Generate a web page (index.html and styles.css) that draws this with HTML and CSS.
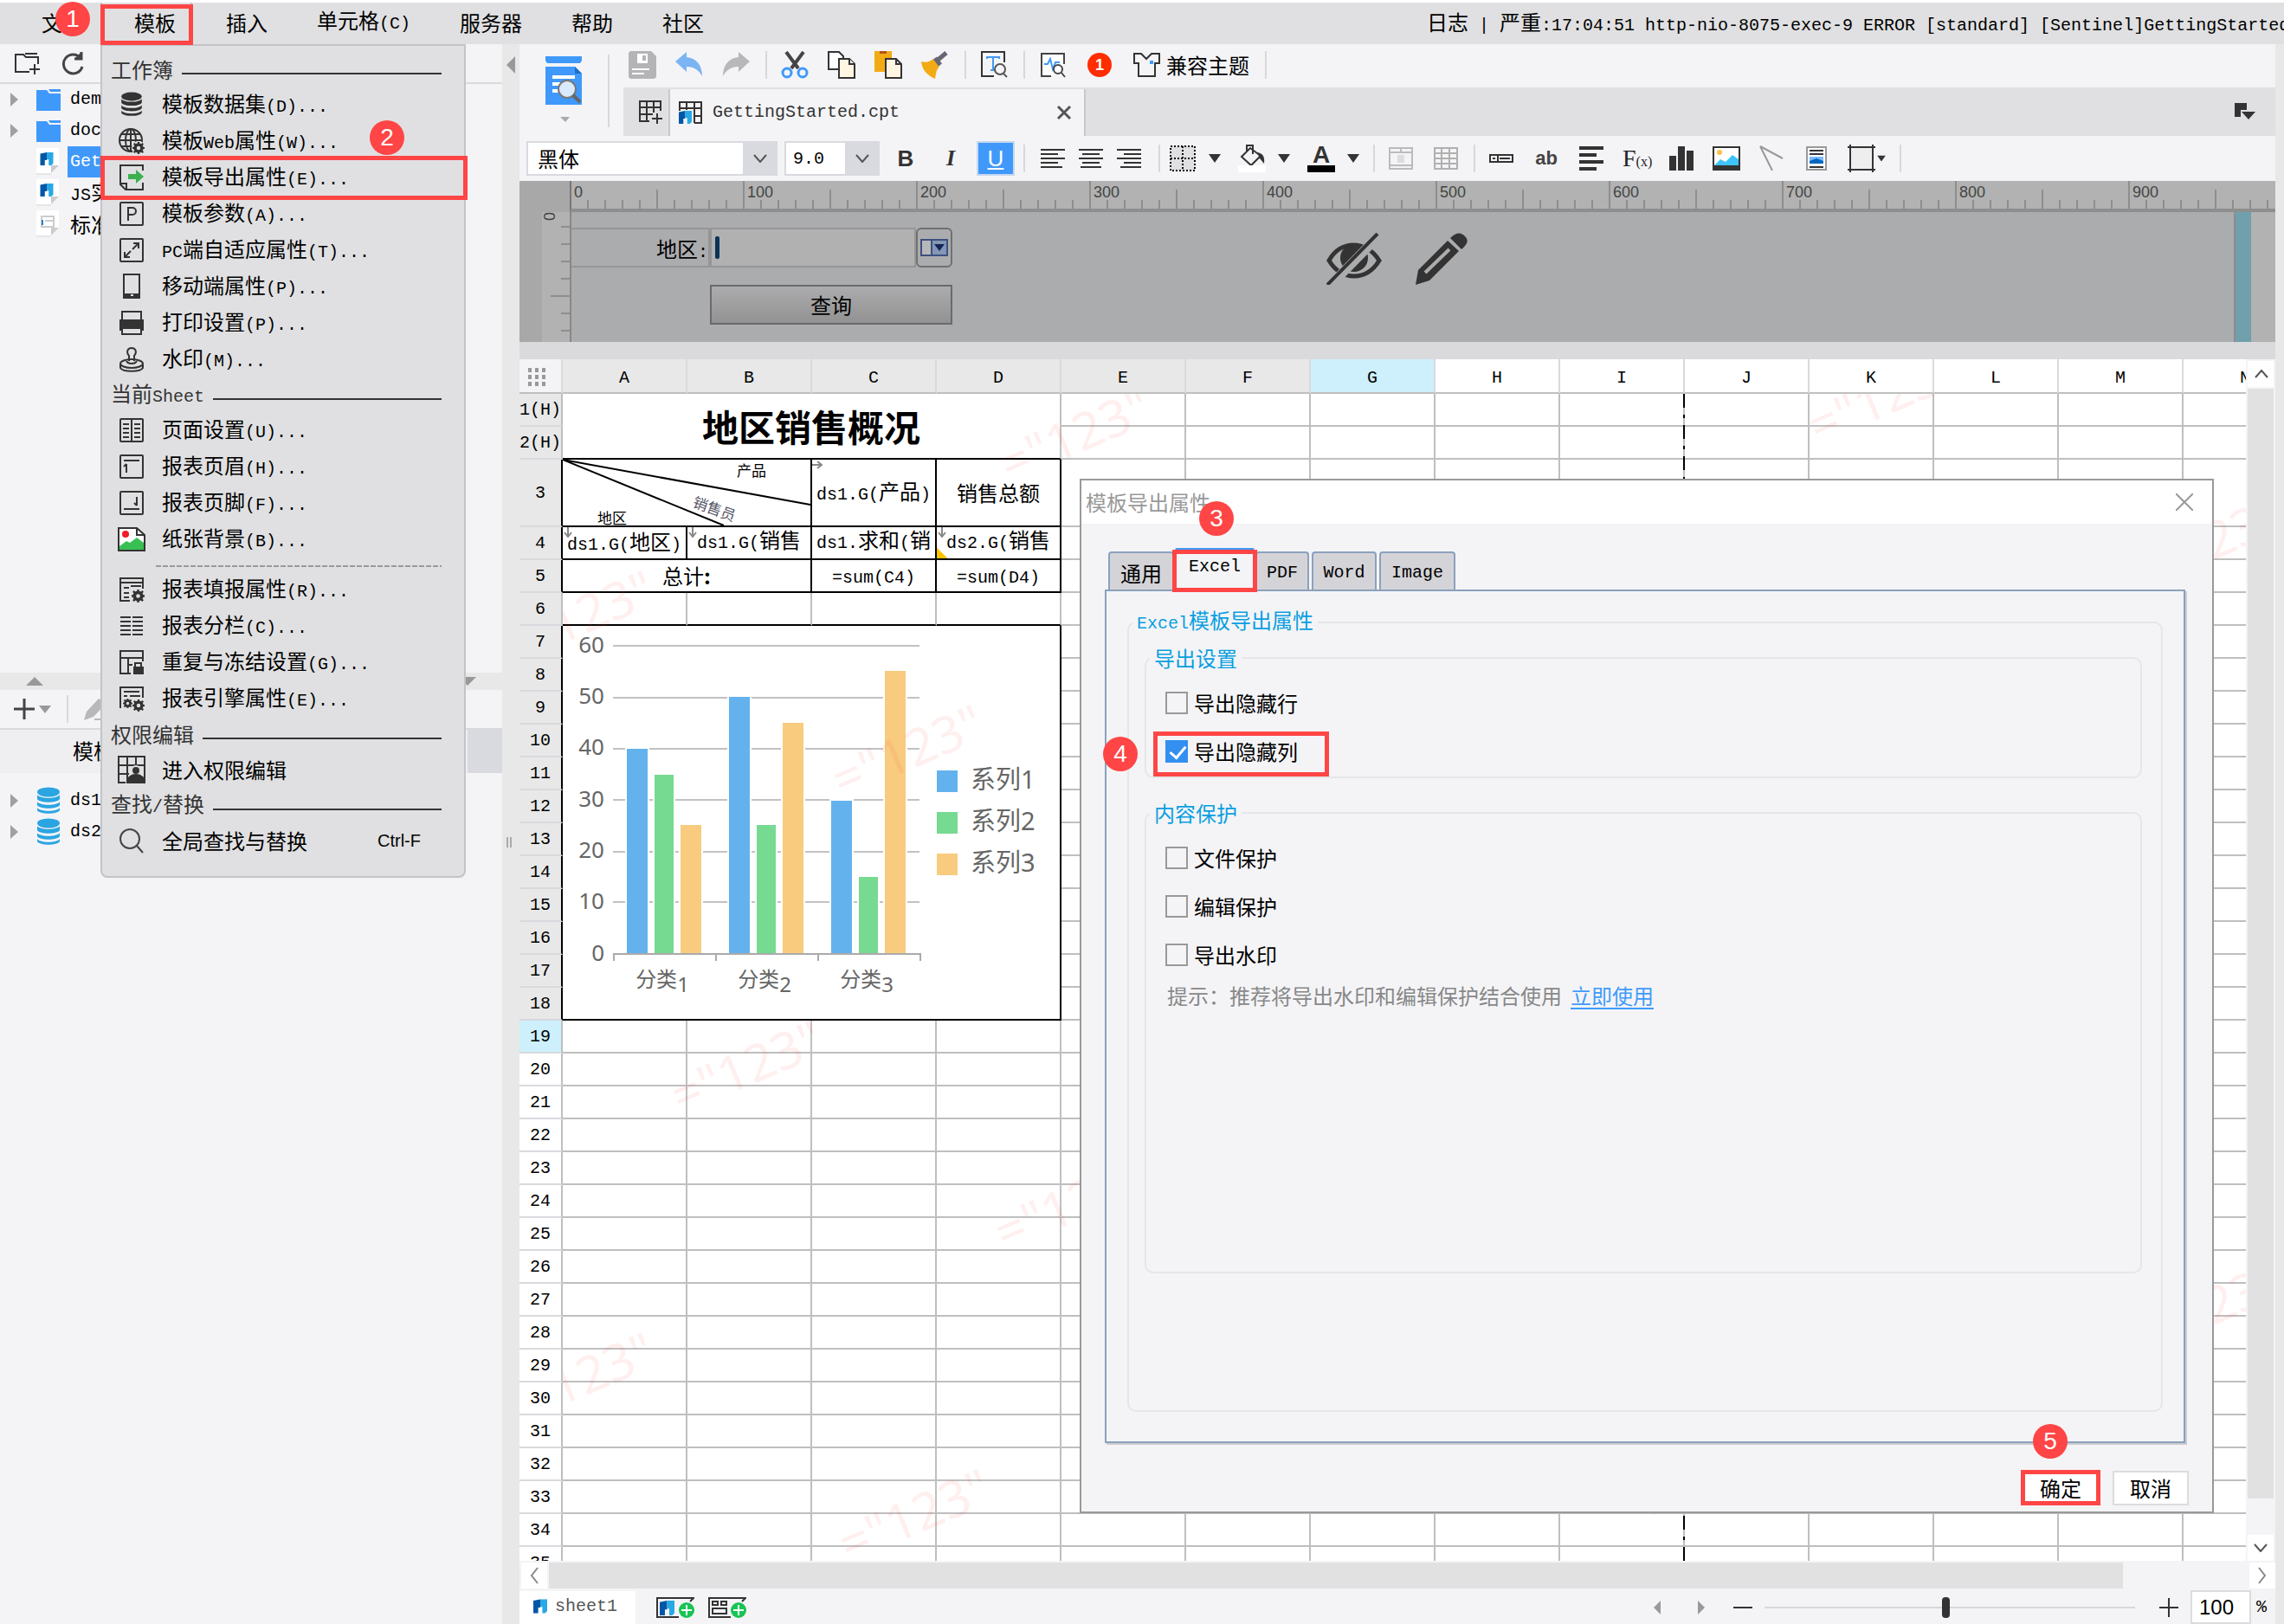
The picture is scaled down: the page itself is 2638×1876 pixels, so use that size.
FILE: index.html
```html
<!DOCTYPE html>
<html lang="zh-CN">
<head>
<meta charset="utf-8">
<title>GettingStarted.cpt</title>
<link rel="stylesheet" href="styles.css">
</head>
<body>
<svg class="defs" aria-hidden="true">
  <defs>
    <symbol id="db" viewBox="0 0 28 32"><ellipse cx="14" cy="6" rx="13" ry="5.500"/><path d="M1 9c3 5 23 5 26 0v5c-3 5-23 5-26 0zM1 17c3 5 23 5 26 0v4c-3 5-23 5-26 0zM1 24c3 5 23 5 26 0v3c-3 5-23 5-26 0z"/></symbol>
    <symbol id="folder" viewBox="0 0 28 26"><path d="M0 2h12l3 4h13v20H0z"/><path d="M14 1h14v3H16z"/></symbol>
    <symbol id="fr" viewBox="0 0 20 20"><path d="M0 2L10 0v12H7v8H0z" fill="#0057a8"/><path d="M10 0h10v17l-3 3h-4v-9h-3z" fill="#29a8e5"/></symbol>
    <symbol id="file" viewBox="0 0 26 32"><path d="M0 0h26v20l-9 9H0z" fill="#fff"/><path d="M17 29v-9h9z" fill="#ccc"/><path d="M0 30h17" stroke="#e6e6e6" stroke-width="2"/></symbol>
    <symbol id="gear" viewBox="0 0 16 16"><circle cx="8" cy="8" r="4.500" fill="none" stroke="#333" stroke-width="4"/><path d="M8 0v3M8 13v3M0 8h3M13 8h3M2 2l3 3M11 11l3 3M14 2l-3 3M5 11l-3 3" stroke="#333" stroke-width="2.500"/></symbol>
    <symbol id="caret" viewBox="0 0 14 10"><path d="M0 0h14L7 10z"/></symbol>
    <symbol id="chev" viewBox="0 0 16 10"><path d="M1 1l7 8 7-8" fill="none" stroke="#555" stroke-width="2"/></symbol>
    <symbol id="box" viewBox="0 0 32 32"><rect x="3" y="3" width="26" height="26" rx="1" fill="none" stroke="#333" stroke-width="2"/></symbol>
  </defs>
</svg>

<div class="app">
  <header class="menubar">
    <nav class="menus">
      <button class="mi">文件</button>
      <button class="mi open">模板</button>
      <button class="mi">插入</button>
      <button class="mi">单元格<span class="m">(C)</span></button>
      <button class="mi">服务器</button>
      <button class="mi">帮助</button>
      <button class="mi">社区</button>
    </nav>
    <p class="log">日志<span class="m"> | </span>严重<span class="m">:17:04:51 http-nio-8075-exec-9 ERROR [standard] [Sentinel]GettingStarted.cpt</span></p>
    <span class="mark mark-menu"></span>
    <span class="badge b1">1</span>
  </header>

  <div class="main">
    <aside class="side">
      <div class="sidebar-tools">
        <svg width="32" height="26" viewBox="0 0 32 26" fill="none" stroke="#333" stroke-width="2"><path d="M18 23H2V3h9l3 3h14v8M13 2h14M24 14v12M18 20h12"/></svg>
        <svg width="28" height="28" viewBox="0 0 28 28" fill="none" stroke="#444" stroke-width="3"><path d="M23 8A11 11 0 1 0 25 18"/><path d="M24 1v8h-8" fill="#444"/></svg>
      </div>
      <ul class="tree files">
        <li><i class="tri"></i><svg class="fold" width="28" height="26"><use href="#folder"/></svg><span class="m">demo</span></li>
        <li><i class="tri"></i><svg class="fold" width="28" height="26"><use href="#folder"/></svg><span class="m">doc</span></li>
        <li class="sel"><i class="tri none"></i><svg width="28" height="32"><use href="#file" width="26" height="32"/><use href="#fr" x="4" y="5" width="16" height="15"/></svg><span class="m">GettingStarted</span></li>
        <li><i class="tri none"></i><svg width="28" height="32"><use href="#file" width="26" height="32"/><use href="#fr" x="4" y="5" width="16" height="15"/></svg><span><span class="m">JS</span>实例</span></li>
        <li><i class="tri none"></i><svg width="28" height="32"><use href="#file" width="26" height="32"/><path d="M6 7h14v12H6zM10 12h10" fill="none" stroke="#ccc" stroke-width="2"/><path d="M7 11v6" stroke="#2b7fd0" stroke-width="2"/></svg><span>标准报表</span></li>
      </ul>
      <div class="hsplit"><i class="up"></i><i class="down"></i></div>
      <div class="sidebar-tools ds">
        <svg width="44" height="28" viewBox="0 0 44 28"><path d="M12 2v24M0 14h24" stroke="#444" stroke-width="3"/><path d="M29 10h14l-7 9z" fill="#999"/></svg>
        <i class="sep"></i>
        <svg width="30" height="28" viewBox="0 0 30 28" fill="#b8b8b8"><path d="M1 27l3-10L18 2l8 6-14 15zM13 25h16v2H13z"/></svg>
      </div>
      <div class="ds-head"><span>模板数据集</span></div>
      <ul class="tree">
        <li><i class="tri"></i><svg class="cyl" width="28" height="32"><use href="#db"/></svg><span class="m">ds1</span></li>
        <li><i class="tri"></i><svg class="cyl" width="28" height="32"><use href="#db"/></svg><span class="m">ds2</span></li>
      </ul>
    </aside>
    <div class="vsplit"><i></i><b></b></div>

    <section class="work">
      <div class="top">
        <button class="preview" aria-label="预览">
          <svg width="42" height="76" viewBox="0 0 42 76"><path d="M0 0h42v5l-2 3H2L0 5zM0 12h34l8 8v36H0z" fill="#3f99fa"/><path d="M34 12l8 8h-8z" fill="#1c6fc8"/><path d="M8 24h26M8 32h12M8 40h10" stroke="#fff" stroke-width="4"/><circle cx="25" cy="38" r="10" fill="#d9eafe" stroke="#777" stroke-width="2"/><path d="M32 45l8 8" stroke="#666" stroke-width="4"/><path d="M17 70h11l-5 6z" fill="#aaa"/></svg>
        </button>
        <div class="tools">
          <button aria-label="保存"><svg viewBox="0 0 32 32"><path d="M2 0h24l6 6v24l-2 2H2l-2-2V2z" fill="#b4b4b7"/><path d="M10 3h12v11H10z" fill="#fff"/><path d="M16 5h4v6h-4z" fill="#b4b4b7"/><path d="M4 21h20M4 26h14" stroke="#fff" stroke-width="2"/></svg></button>
          <button aria-label="撤销"><svg viewBox="0 0 32 32"><path d="M0 12L13 1v6c11 1 18 9 18 22-4-7-9-11-18-11v6z" fill="#7ab4f2"/></svg></button>
          <button aria-label="重做"><svg viewBox="0 0 32 32"><path d="M32 12L19 1v6C8 8 1 16 1 29c4-7 9-11 18-11v6z" fill="#b8b8ba"/></svg></button>
          <i class="sep"></i>
          <button aria-label="剪切"><svg viewBox="0 0 32 32" fill="none"><path d="M6 1l14 19M26 1L12 20" stroke="#444" stroke-width="4"/><circle cx="7" cy="25" r="5" stroke="#3f99fa" stroke-width="3"/><circle cx="25" cy="25" r="5" stroke="#3f99fa" stroke-width="3"/></svg></button>
          <button aria-label="复制"><svg viewBox="0 0 32 32" fill="#fff" stroke="#333" stroke-width="2"><path d="M1 1h12l5 5v15H1z"/><path d="M13 9h12l6 6v16H13z" fill="#fff5e0"/><path d="M25 9v6h6"/></svg></button>
          <button aria-label="粘贴"><svg viewBox="0 0 32 32"><path d="M0 0h20v24H0z" fill="#f2ab15"/><path d="M6 0h8v3H6z" fill="#b5531b"/><path d="M13 9h12l6 6v16H13zM25 9v6h6" fill="#fff5e0" stroke="#333" stroke-width="2"/></svg></button>
          <button aria-label="格式刷"><svg viewBox="0 0 32 32"><path d="M0 12c6 2 10 0 14-3l7 9c-4 4-4 9-5 14C7 28 1 22 0 12z" fill="#f2ab15"/><path d="M17 12L29 2M16 8l6 8" stroke="#666675" stroke-width="5"/></svg></button>
          <i class="sep"></i>
          <button aria-label="查找文本"><svg viewBox="0 0 32 32" fill="none" stroke="#333" stroke-width="2"><path d="M16 29H2V1h26v12"/><path d="M8 9V7h14v2M15 7v15M12 22h6" stroke="#3f99fa"/><circle cx="23" cy="21" r="6" stroke="#555"/><path d="M27 26l4 4" stroke="#555"/></svg></button>
          <i class="sep"></i>
          <button aria-label="性能诊断"><svg viewBox="0 0 32 32" fill="none" stroke="#444" stroke-width="2"><path d="M14 29H3V3h26v12" fill="#fff"/><path d="M6 15h4l3-6 3 12 3-8h5" stroke="#3f99fa"/><circle cx="22" cy="21" r="5" fill="#fff"/><path d="M26 25l4 5"/></svg></button>
          <span class="alert">1</span>
          <button class="theme"><svg viewBox="0 0 32 32" fill="none" stroke="#333" stroke-width="2"><path d="M2 3h8l6 6 6-6h9v11h-5v15H7V14H2z"/><path d="M20 11h4v4h-4z" fill="#3f99fa" stroke="none"/></svg><span>兼容主题</span></button>
          <i class="sep"></i>
        </div>
        <div class="doctabs">
          <button class="newtab" aria-label="新建"><svg width="30" height="30" viewBox="0 0 30 30" fill="none" stroke="#333" stroke-width="2"><path d="M13 26H2V3h24v11M2 10h24M2 18h15M10 3v23M18 3v13M22 17v12M16 23h12"/></svg></button>
          <button class="doctab"><svg width="28" height="28" viewBox="0 0 28 28"><path d="M1 12V2h25v24h-8M1 9h25M9 2v9M18 2v24M18 18h8" fill="none" stroke="#333" stroke-width="2"/><use href="#fr" y="12" width="15" height="15"/></svg><span class="m">GettingStarted.cpt</span><svg class="x" width="18" height="18" viewBox="0 0 18 18"><path d="M2 2l14 14M16 2L2 16" stroke="#555" stroke-width="3"/></svg></button>
          <svg class="tablist" width="26" height="20" viewBox="0 0 26 20" fill="#333"><path d="M1 0h14v8H8v8H1zM9 10h16l-8 9z"/></svg>
        </div>
      </div>

      <div class="format">
        <div class="fgroup g8">
          <label class="combo wide"><select aria-label="字体"><option>黑体</option></select><svg width="16" height="10"><use href="#chev"/></svg></label>
          <label class="combo"><select class="num" aria-label="字号"><option>9.0</option></select><svg width="16" height="10"><use href="#chev"/></svg></label>
          <button class="sq bold">B</button>
          <button class="sq ital">I</button>
          <button class="sq under">U</button>
          <i class="sep"></i>
          <button class="al" aria-label="左对齐"><svg width="28" height="24" viewBox="0 0 28 24"><path d="M0 2h28M0 7h20M0 12h28M0 17h20M0 22h25" stroke="#333" stroke-width="2"/></svg></button>
          <button class="al" aria-label="居中"><svg width="28" height="24" viewBox="0 0 28 24"><path d="M0 2h28M4 7h20M0 12h28M4 17h20M2 22h24" stroke="#333" stroke-width="2"/></svg></button>
          <button class="al" aria-label="右对齐"><svg width="28" height="24" viewBox="0 0 28 24"><path d="M0 2h28M8 7h20M0 12h28M8 17h20M4 22h24" stroke="#333" stroke-width="2"/></svg></button>
          <i class="sep"></i>
        </div>
        <div class="fgroup g20">
          <button class="drop" aria-label="边框"><svg viewBox="0 0 32 32"><path d="M2 2h28v28H2z" fill="#e0e0e2"/><path d="M2 2h28v28H2zM16 2v28M2 16h28" fill="none" stroke="#000" stroke-width="2" stroke-dasharray="2 2"/></svg><svg class="car"><use href="#caret"/></svg></button>
          <button class="drop" aria-label="背景色"><svg viewBox="0 0 32 32"><path d="M4 14L14 4l12 9-11 11zM10 8V1h7v10" fill="none" stroke="#333" stroke-width="2"/><path d="M22 9c6 1 9 4 8 13l-5-6z" fill="#333"/><path d="M0 24h32v8H0z" fill="#fff"/></svg><svg class="car"><use href="#caret"/></svg></button>
          <button class="drop fc" aria-label="字体颜色"><span class="fcl">A</span><svg class="car"><use href="#caret"/></svg></button>
          <i class="sep"></i>
          <button aria-label="合并"><svg viewBox="0 0 32 32" fill="none" stroke="#bbb" stroke-width="2"><path d="M3 4h26v24H3zM3 9h26M16 4v5M3 24h26"/><path d="M12 12h8v9h-8z" fill="#ddd" stroke="none"/></svg></button>
          <button aria-label="拆分"><svg viewBox="0 0 32 32" fill="none" stroke="#b0b0b0" stroke-width="2"><path d="M3 4h26v24H3zM3 10h26M3 16h26M3 22h26M11 4v24M20 4v24"/></svg></button>
          <i class="sep"></i>
          <button aria-label="控件"><svg viewBox="0 0 32 32" fill="none" stroke="#333" stroke-width="2"><path d="M3 12h26v8H3zM12 12v8M14 16h12M6 16h3"/></svg></button>
          <button class="ab">ab</button>
          <button aria-label="段落"><svg viewBox="0 0 32 32"><path d="M2 4h28M2 12h20M2 20h28M2 28h20" stroke="#333" stroke-width="4"/></svg></button>
          <button class="fx">F<small>(x)</small></button>
          <button aria-label="图表"><svg viewBox="0 0 32 32" fill="#333"><path d="M2 13h8v17H2zM12 2h8v28h-8zM22 7h8v23h-8z"/></svg></button>
          <button aria-label="图片"><svg viewBox="0 0 32 32"><path d="M1 3h30v26H1z" fill="#fff" stroke="#333" stroke-width="2"/><path d="M1 24h30v5H1z" fill="#333"/><circle cx="8" cy="9" r="3" fill="#fdc04f"/><path d="M2 24l7-7 6 3 8-8 7 5v7z" fill="#3fc3fb"/></svg></button>
          <button aria-label="斜线"><svg viewBox="0 0 32 32"><path d="M3 2l26 14M3 2l14 28" stroke="#999" stroke-width="2"/></svg></button>
          <button aria-label="富文本"><svg viewBox="0 0 32 32"><path d="M5 3h22v26H5z" fill="#fff" stroke="#999" stroke-width="2"/><path d="M8 7h16M8 11h16M8 26h16" stroke="#333" stroke-width="2"/><path d="M8 14h16v8H8z" fill="#7ab8ff"/><path d="M8 22v-3l8-3 8 3v3z" fill="#0067c0"/></svg></button>
          <button class="drop tight" aria-label="悬浮元素"><svg viewBox="0 0 32 32"><path d="M3 3h26v26H3z" fill="#eee"/><path d="M0 3h32M0 29h32M3 0v32M29 0v32" stroke="#333" stroke-width="2"/></svg><svg class="car" viewBox="0 0 14 10"><use href="#caret"/></svg></button>
          <i class="sep"></i>
        </div>
      </div>

      <div class="ruler"><div class="scale"><span>0</span><span>100</span><span>200</span><span>300</span><span>400</span><span>500</span><span>600</span><span>700</span><span>800</span><span>900</span></div></div>
      <div class="params">
        <div class="vruler"><span>0</span></div>
        <form class="pform">
          <div class="prow"><label for="area">地区<span class="m">:</span></label><span class="pin"><i></i><input id="area" type="text"></span><button type="button" class="pdrop" aria-label="选择"><svg width="32" height="20" viewBox="0 0 32 20"><path d="M1 1h30v18H1z" fill="#b8b8ba" stroke="#3d5080" stroke-width="2"/><path d="M13 1h18v18H13z" fill="#8397b5" stroke="#3d5080" stroke-width="2"/><path d="M16 6h12l-6 8z" fill="#142558"/></svg></button></div>
          <button type="button" class="query">查询</button>
        </form>
        <div class="teal"></div>
        <div class="pover">
          <svg width="64" height="60" viewBox="0 0 64 60"><path d="M3 32C16 8 46 8 61 32 46 56 18 56 3 32z" fill="none" stroke="#333" stroke-width="5"/><circle cx="32" cy="29" r="16" fill="#333"/><path d="M3 62L61 3" stroke="#abacae" stroke-width="11"/><path d="M1 60L59 1" stroke="#333" stroke-width="4"/></svg>
          <svg width="62" height="60" viewBox="0 0 62 60" fill="#333"><path d="M1 60l3-17L38 9l13 12-34 34z"/><path d="M41 6c8-8 13-6 17-2s4 8-4 15z"/><path d="M12 46l28-27" stroke="#abacae" stroke-width="4"/></svg>
        </div>
      </div>
      <div class="psplit"></div>

      <div class="sheetwrap">
        <div class="sheet">
          <table class="grid">
            <colgroup><col class="rh"><col span="14"></colgroup>
            <thead><tr><th class="corner"><svg width="22" height="22" viewBox="0 0 22 22" fill="#999"><path d="M0 0h4v5H0zM8 0h4v5H8zM16 0h4v5h-4zM0 8h4v5H0zM8 8h4v5H8zM16 8h4v5h-4zM0 16h4v5H0zM8 16h4v5H8zM16 16h4v5h-4z"/></svg></th><th>A<th>B<th>C<th>D<th>E<th>F<th class="cur">G<th class="w">H<th class="w">I<th class="w">J<th class="w">K<th class="w">L<th class="w">M<th class="w">N</tr></thead>
            <tbody>
              <tr><th>1(H)<td colspan="4" rowspan="2" class="title kb">地区销售概况<td><td><td><td><td><td><td><td><td><td></tr>
              <tr><th>2(H)<td><td><td><td><td><td><td><td><td><td></tr>
              <tr class="tall k"><th>3<td colspan="2" class="kc"><svg class="diag" width="286" height="76" viewBox="0 0 286 76"><path d="M0 0L286 52M0 0L186 76" stroke="#000" stroke-width="2"/><text x="201" y="19">产品</text><text x="40" y="74">地区</text><text transform="translate(149 54) rotate(20)" class="tint">销售员</text></svg><td class="kc ar"><span class="m">ds1.G(</span>产品<span class="m">)</span><svg class="ex right" width="12" height="12" viewBox="0 0 12 12"><path d="M0 6h10M6 2l5 4-5 4" stroke="#888" stroke-width="2" fill="none"/></svg><td class="kc">销售总额<td><td><td><td><td><td><td><td><td><td></tr>
              <tr class="k"><th>4<td class="kc ar"><span class="m">ds1.G(</span>地区<span class="m">)</span><svg class="ex" width="12" height="12" viewBox="0 0 12 12"><path d="M6 0v10M2 6l4 5 4-5" stroke="#888" stroke-width="2" fill="none"/></svg><td class="kc ar"><div class="clip"><span class="m">ds1.G(</span>销售<br>员<span class="m">)</span></div><svg class="ex" width="12" height="12" viewBox="0 0 12 12"><path d="M6 0v10M2 6l4 5 4-5" stroke="#888" stroke-width="2" fill="none"/></svg><td class="kc"><div class="clip"><span class="m">ds1.</span>求和<span class="m">(</span>销<br>量<span class="m">)</span></div><td class="kc ar warn"><div class="clip"><span class="m">ds2.G(</span>销售<br>总额<span class="m">)</span></div><svg class="ex" width="12" height="12" viewBox="0 0 12 12"><path d="M6 0v10M2 6l4 5 4-5" stroke="#888" stroke-width="2" fill="none"/></svg><td><td><td><td><td><td><td><td><td><td></tr>
              <tr class="k"><th>5<td colspan="2" class="kc">总计<b>:</b><td class="kc"><span class="m">=sum(C4)</span><td class="kc"><span class="m">=sum(D4)</span><td><td><td><td><td><td><td><td><td><td></tr>
              <tr><th>6<td class="kb"><td class="kb"><td class="kb"><td class="kb"><td><td><td><td><td><td><td><td><td><td></tr>
              <tr class="k"><th>7<td colspan="4" rowspan="12" class="kc chart">
                <svg width="574" height="454" viewBox="650 723 574 454">
                  <g stroke="#c2c2c2" stroke-width="2"><path d="M708 746h354M708 806h354M708 865h354M708 924h354M708 984h354M708 1042h354"/></g>
                  <g stroke="#fff" stroke-width="4" paint-order="stroke"><g fill="#63b2ee"><path d="M724 865h24v236h-24zM842 805h24v296h-24zM960 925h24v176h-24z"/></g><g fill="#76da91"><path d="M756 895h22v206h-22zM874 953h22v148h-22zM992 1013h22v88h-22z"/></g><g fill="#f8cb7f"><path d="M786 953h24v148h-24zM904 835h24v266h-24zM1022 775h24v326h-24z"/></g></g>
                  <path d="M709 1110v-8h354v8M827 1102v8M945 1102v8" fill="none" stroke="#aaa" stroke-width="2"/>
                  <g class="ax"><text x="698" y="754">60</text><text x="698" y="813">50</text><text x="698" y="872">40</text><text x="698" y="932">30</text><text x="698" y="991">20</text><text x="698" y="1050">10</text><text x="698" y="1110">0</text></g>
                  <g class="cat"><text x="765" y="1140">分类<tspan dy="6">1</tspan></text><text x="883" y="1140">分类<tspan dy="6">2</tspan></text><text x="1001" y="1140">分类<tspan dy="6">3</tspan></text></g>
                  <path d="M1082 890h24v25h-24z" fill="#63b2ee"/><path d="M1082 938h24v25h-24z" fill="#76da91"/><path d="M1082 986h24v25h-24z" fill="#f8cb7f"/>
                  <g class="leg"><text x="1121" y="911">系列1</text><text x="1121" y="959">系列2</text><text x="1121" y="1007">系列3</text></g>
                </svg><td><td><td><td><td><td><td><td><td><td></tr>
              <tr class="k"><th>8<td><td><td><td><td><td><td><td><td><td></tr>
              <tr class="k"><th>9<td><td><td><td><td><td><td><td><td><td></tr>
              <tr class="k"><th>10<td><td><td><td><td><td><td><td><td><td></tr>
              <tr class="k"><th>11<td><td><td><td><td><td><td><td><td><td></tr>
              <tr class="k"><th>12<td><td><td><td><td><td><td><td><td><td></tr>
              <tr class="k"><th>13<td><td><td><td><td><td><td><td><td><td></tr>
              <tr class="k"><th>14<td><td><td><td><td><td><td><td><td><td></tr>
              <tr class="k"><th>15<td><td><td><td><td><td><td><td><td><td></tr>
              <tr class="k"><th>16<td><td><td><td><td><td><td><td><td><td></tr>
              <tr class="k"><th>17<td><td><td><td><td><td><td><td><td><td></tr>
              <tr class="k"><th>18<td><td><td><td><td><td><td><td><td><td></tr>
              <tr><th class="cur">19<td><td><td><td><td><td><td><td><td><td><td><td><td><td></tr>
            </tbody>
            <tbody class="w">
              <tr><th>20<td><td><td><td><td><td><td><td><td><td><td><td><td><td></tr>
              <tr><th>21<td><td><td><td><td><td><td><td><td><td><td><td><td><td></tr>
              <tr><th>22<td><td><td><td><td><td><td><td><td><td><td><td><td><td></tr>
              <tr><th>23<td><td><td><td><td><td><td><td><td><td><td><td><td><td></tr>
              <tr><th>24<td><td><td><td><td><td><td><td><td><td><td><td><td><td></tr>
              <tr><th>25<td><td><td><td><td><td><td><td><td><td><td><td><td><td></tr>
              <tr><th>26<td><td><td><td><td><td><td><td><td><td><td><td><td><td></tr>
              <tr><th>27<td><td><td><td><td><td><td><td><td><td><td><td><td><td></tr>
              <tr><th>28<td><td><td><td><td><td><td><td><td><td><td><td><td><td></tr>
              <tr><th>29<td><td><td><td><td><td><td><td><td><td><td><td><td><td></tr>
              <tr><th>30<td><td><td><td><td><td><td><td><td><td><td><td><td><td></tr>
              <tr><th>31<td><td><td><td><td><td><td><td><td><td><td><td><td><td></tr>
              <tr><th>32<td><td><td><td><td><td><td><td><td><td><td><td><td><td></tr>
              <tr><th>33<td><td><td><td><td><td><td><td><td><td><td><td><td><td></tr>
              <tr><th>34<td><td><td><td><td><td><td><td><td><td><td><td><td><td></tr>
              <tr><th>35<td><td><td><td><td><td><td><td><td><td><td><td><td><td></tr>
            </tbody>
          </table>
          <svg class="wm" width="1944" height="1348" viewBox="650 455 1944 1348">
            <path d="M1945 455V1803" stroke="#000" stroke-width="2" stroke-dasharray="16 8 4 8"/>
            <g><text transform="translate(1165 558) rotate(-23)">="123"</text><text transform="translate(2099 514) rotate(-23)">="123"</text><text transform="translate(592 768) rotate(-23)">="123"</text><text transform="translate(972 923) rotate(-23)">="123"</text><text transform="translate(786 1288) rotate(-23)">="123"</text><text transform="translate(1160 1446) rotate(-23)">="123"</text><text transform="translate(592 1648) rotate(-23)">="123"</text><text transform="translate(980 1806) rotate(-23)">="123"</text><text transform="translate(1912 1763) rotate(-23)">="123"</text><text transform="translate(2472 683) rotate(-23)">="123"</text><text transform="translate(2472 1567) rotate(-23)">="123"</text></g>
          </svg>
        </div>
        <div class="vbar"><button class="sb" aria-label="向上"><svg width="18" height="11"><use href="#chev" transform="rotate(180 9 5)" width="16" height="10"/></svg></button><i></i><button class="sb" aria-label="向下"><svg width="16" height="10"><use href="#chev"/></svg></button></div>
      </div>
      <div class="hbar"><button class="sb" aria-label="向左"><svg width="10" height="20" viewBox="0 0 10 20"><path d="M9 1L2 10l7 9" fill="none" stroke="#888" stroke-width="2"/></svg></button><i></i><button class="sb end" aria-label="向右"><svg width="10" height="20" viewBox="0 0 10 20"><path d="M1 1l7 9-7 9" fill="none" stroke="#888" stroke-width="2"/></svg></button></div>
      <footer class="status">
        <button class="shtab"><svg width="16" height="17"><use href="#fr" width="16" height="17"/></svg><span class="m">sheet1</span></button>
        <button class="add" aria-label="新增报表"><svg width="44" height="26" viewBox="0 0 44 26"><path d="M26 24H1V2h42l-4 4" fill="none" stroke="#333" stroke-width="2"/><use href="#fr" x="4" y="5" width="17" height="17"/><circle cx="35" cy="16" r="9" fill="#17c454"/><path d="M35 10v12M29 16h12" stroke="#fff" stroke-width="2"/></svg></button>
        <button class="add" aria-label="新增聚合块"><svg width="44" height="26" viewBox="0 0 44 26"><path d="M26 24H1V2h42l-4 4M5 6h6v4H5zM15 6h6v4h-6zM5 14h16v6H5z" fill="none" stroke="#333" stroke-width="2"/><circle cx="35" cy="16" r="9" fill="#17c454"/><path d="M35 10v12M29 16h12" stroke="#fff" stroke-width="2"/></svg></button>
        <div class="zoom">
          <svg width="60" height="16" viewBox="0 0 60 16" fill="#999"><path d="M8 0v16L0 8zM51 0v16l8-8z"/></svg>
          <svg class="minus" width="22" height="22" viewBox="0 0 22 22"><path d="M0 11h22" stroke="#333" stroke-width="2"/></svg>
          <input type="range" min="0" max="100" value="49" aria-label="缩放">
          <svg class="plus" width="22" height="22" viewBox="0 0 22 22"><path d="M0 11h22M11 0v22" stroke="#333" stroke-width="2"/></svg>
          <input type="text" value="100" aria-label="缩放比例"><span class="pct">%</span>
        </div>
      </footer>
    </section>
    <div class="edge"></div>
  </div>

  <div class="menu" role="menu">
    <h3>工作簿</h3>
    <button><svg viewBox="0 0 32 32"><use href="#db" x="3" y="1" width="26" height="29" fill="#333"/></svg><span>模板数据集<span class="m">(D)...</span></span></button>
    <button><svg viewBox="0 0 32 32" fill="none" stroke="#333" stroke-width="2"><circle cx="15" cy="15" r="13"/><ellipse cx="15" cy="15" rx="6" ry="13"/><path d="M2 15h26M4 8h22M4 22h14M15 2v26"/><circle cx="24" cy="24" r="8" fill="#e0e0e2" stroke="none"/><use href="#gear" x="17" y="17" width="14" height="14"/></svg><span>模板<span class="m">Web</span>属性<span class="m">(W)...</span></span></button>
    <button class="hot"><svg viewBox="0 0 32 32"><path d="M29 8V2H3v22l6 6h20v-8M3 23h7v7" fill="none" stroke="#333" stroke-width="2"/><path d="M12 12h9V7l9 8-9 8v-5h-9z" fill="#3bb04f"/></svg><span>模板导出属性<span class="m">(E)...</span></span><span class="mark"></span></button>
    <button><svg viewBox="0 0 32 32"><use href="#box"/><path d="M12 24V9h5a4 4 0 0 1 0 8h-5" fill="none" stroke="#333" stroke-width="2"/></svg><span>模板参数<span class="m">(A)...</span></span></button>
    <button><svg viewBox="0 0 32 32"><use href="#box"/><path d="M18 8h6v6M24 8l-7 7M14 24H8v-6M8 24l7-7" fill="none" stroke="#333" stroke-width="2"/></svg><span><span class="m">PC</span>端自适应属性<span class="m">(T)...</span></span></button>
    <button><svg viewBox="0 0 32 32"><path d="M7 2h18v27H7z" fill="none" stroke="#333" stroke-width="2"/><path d="M7 24h18v5H7z" fill="#333"/><path d="M15 26h3" stroke="#ddd" stroke-width="2"/></svg><span>移动端属性<span class="m">(P)...</span></span></button>
    <button><svg viewBox="0 0 32 32"><path d="M5 3h22v10H5zM5 18h22v11H5z" fill="#e0e0e2" stroke="#333" stroke-width="2"/><path d="M2 12h28v13h-4v-2H6v2H2z" fill="#333"/></svg><span>打印设置<span class="m">(P)...</span></span></button>
    <button><svg viewBox="0 0 32 32" fill="none" stroke="#333" stroke-width="2"><path d="M13 18V12c-4-5-1-9 3-9s7 4 3 9v6"/><ellipse cx="16" cy="21" rx="13" ry="5"/><path d="M3 22v4c3 5 23 5 26 0v-4M10 18c2 4 10 4 12 0"/></svg><span>水印<span class="m">(M)...</span></span></button>
    <h3><span>当前<span class="m">Sheet</span></span></h3>
    <button><svg viewBox="0 0 32 32" fill="none" stroke="#333" stroke-width="2"><use href="#box"/><path d="M16 3v26M6 9h7M6 14h7M6 19h7M6 24h7M19 9h7M19 14h7M19 19h7M19 24h7"/></svg><span>页面设置<span class="m">(U)...</span></span></button>
    <button><svg viewBox="0 0 32 32" fill="none" stroke="#333" stroke-width="2"><use href="#box"/><path d="M7 9h18M10 23V13M7 16l3-3"/></svg><span>报表页眉<span class="m">(H)...</span></span></button>
    <button><svg viewBox="0 0 32 32" fill="none" stroke="#333" stroke-width="2"><use href="#box"/><path d="M7 23h18M22 9v10M19 16l3 3"/></svg><span>报表页脚<span class="m">(F)...</span></span></button>
    <button><svg viewBox="0 0 32 32"><path d="M1 3h21l9 8v18H1z" fill="#fff" stroke="#333" stroke-width="2"/><path d="M22 3v8h9" fill="none" stroke="#333" stroke-width="2"/><circle cx="9" cy="10" r="4" fill="#f11d28"/><path d="M2 28v-4l8-6 4 2 8-6 8 6v8z" fill="#38c055"/></svg><span>纸张背景<span class="m">(B)...</span></span></button>
    <hr>
    <button><svg viewBox="0 0 32 32" fill="none" stroke="#333" stroke-width="2"><path d="M14 29H3V3h26v12M3 8h26M7 14h6M15 12h12M7 20h6M7 25h6"/><use href="#gear" x="16" y="16" width="15" height="15"/></svg><span>报表填报属性<span class="m">(R)...</span></span></button>
    <button><svg viewBox="0 0 32 32" stroke="#333" stroke-width="2"><path d="M3 6h12M3 11h12M3 16h12M3 21h12M3 26h12M17 6h12M17 11h12M17 16h12M17 21h12M17 26h12"/></svg><span>报表分栏<span class="m">(C)...</span></span></button>
    <button><svg viewBox="0 0 32 32" fill="none" stroke="#333" stroke-width="2"><path d="M15 29H3V3h26v12M3 11h26M12 11v18M12 19h5"/><path d="M18 21h12v9H18z" fill="#333" stroke="none"/><path d="M20 21v-4h7v4"/></svg><span>重复与冻结设置<span class="m">(G)...</span></span></button>
    <button><svg viewBox="0 0 32 32" fill="none" stroke="#333" stroke-width="2"><path d="M3 27V3h26v12M7 8h18M7 13h4M14 13h12"/><use href="#gear" x="6" y="16" width="11" height="11"/><use href="#gear" x="17" y="17" width="14" height="14"/></svg><span>报表引擎属性<span class="m">(E)...</span></span></button>
    <h3>权限编辑</h3>
    <button><svg viewBox="0 0 32 32" fill="none" stroke="#333" stroke-width="2"><path d="M9 31H1V1h30v30M1 11h30M1 21h12M11 1v30M21 1v10"/><circle cx="21" cy="17" r="5" fill="#333" stroke="#e0e0e2"/><path d="M11 31c0-12 20-12 20 0z" fill="#333"/></svg><span>进入权限编辑</span></button>
    <h3><span>查找<span class="m">/</span>替换</span></h3>
    <button><svg viewBox="0 0 32 32" fill="none" stroke="#444" stroke-width="2"><circle cx="14" cy="14" r="11"/><path d="M22 22l7 8"/></svg><span>全局查找与替换</span><kbd>Ctrl-F</kbd></button>
    <span class="badge b2">2</span>
  </div>

  <div class="dialog" role="dialog" aria-label="模板导出属性">
    <div class="dtitle"><span>模板导出属性</span><button aria-label="关闭"><svg width="20" height="20" viewBox="0 0 20 20"><path d="M0 0l20 20M20 0L0 20" stroke="#999" stroke-width="2"/></svg></button></div>
    <div class="dbody">
      <div class="dtabs"><button class="t1">通用</button><button class="t2 on m">Excel<span class="mark"></span></button><button class="t3 m">PDF</button><button class="t4 m">Word</button><button class="t5 m">Image</button></div>
      <div class="dpanel">
        <fieldset class="outer">
          <legend><span class="m">Excel</span>模板导出属性</legend>
          <fieldset>
            <legend>导出设置</legend>
            <div class="checks"><label><input type="checkbox">导出隐藏行</label><label class="hot"><input type="checkbox" checked>导出隐藏列<span class="mark"></span></label></div>
          </fieldset>
          <fieldset class="protect">
            <legend>内容保护</legend>
            <div class="checks"><label><input type="checkbox">文件保护</label><label><input type="checkbox">编辑保护</label><label><input type="checkbox">导出水印</label></div>
            <p class="hint">提示：推荐将导出水印和编辑保护结合使用<a href="#">立即使用</a></p>
          </fieldset>
        </fieldset>
      </div>
      <div class="dfoot"><button class="ok">确定<span class="mark"></span></button><button>取消</button></div>
    </div>
    <span class="badge b3">3</span>
    <span class="badge b4">4</span>
    <span class="badge b5">5</span>
  </div>
</div>
</body>
</html>
```

FILE: styles.css
```css
* { box-sizing: border-box; }
body { margin: 0; background: #fff; color: #000; font: 24px/28px "Noto Sans CJK SC", sans-serif; }
button, input, select { font: inherit; color: inherit; margin: 0; padding: 0; border: 0; background: none; border-radius: 0; }
svg { display: block; flex: none; }
p, h3, ul { margin: 0; padding: 0; list-style: none; font-weight: 400; }
.defs { position: absolute; width: 0; height: 0; }
.m { font-family: "Liberation Mono", monospace; font-size: 20px; white-space: pre; }
.sep { width: 2px; height: 32px; background: #d8d8dc; flex: none; }

.app { position: relative; display: flex; flex-direction: column; height: 100vh; padding-top: 3px; overflow: hidden; }
.main { display: flex; flex: 1; min-height: 0; }

/* menu bar */
.menubar { position: relative; display: flex; align-items: center; justify-content: space-between; height: 48px; flex: none; background: #e0e0e2; white-space: nowrap; }
.menus { display: flex; height: 48px; padding-left: 8px; }
.mi { padding: 0 29px 3px 28px; }
.mi:first-child { padding-left: 40px; padding-right: 20px; }
.mi.open { border: solid #c4c4c8; border-width: 0 2px; padding: 0 17px 3px 37px; margin-right: 11px; }
.log { width: 990px; overflow: hidden; }
.badge { position: absolute; width: 40px; height: 40px; border-radius: 50%; background: #ff4545; color: #fff; font: 28px/40px "Liberation Sans", sans-serif; text-align: center; z-index: 3; }
.mark { position: absolute; inset: 0; border: 5px solid #ff4545; z-index: 2; pointer-events: none; }
.mark-menu { left: 116px; right: auto; top: 2px; bottom: -1px; width: 107px; }
.b1 { left: 64px; top: -1px; }

/* left side */
.side { display: flex; flex-direction: column; width: 580px; flex: none; background: #f4f4f7; }
.sidebar-tools { display: flex; align-items: center; gap: 22px; height: 46px; padding: 0 16px; border-bottom: 2px solid #dadadd; }
.ds { gap: 17px; }
.tree li { display: flex; align-items: center; height: 36px; }
.tree svg { margin-right: 8px; }
.tree li > span { padding: 0 3px; line-height: 36px; }
.sel > span { background: #4099fa; color: #fff; }
.tri { width: 30px; height: 16px; margin-left: 12px; flex: none; }
.tri::before { content: ""; display: block; border: 8px solid transparent; border-left: 9px solid #a0a0a0; border-right: 0; width: 0; }
.none::before { visibility: hidden; }
.fold { fill: #3f99fa; }
.cyl { fill: #2ba5e2; }
.files { height: 680px; }
.hsplit { display: flex; justify-content: space-between; align-items: center; height: 20px; padding: 0 30px; background: #e8e8e8; }
.hsplit i { border: 10px solid transparent; border-top: 0; border-bottom: 10px solid #999; }
.hsplit .down { transform: rotate(180deg); }
.ds-head { display: flex; height: 50px; margin-bottom: 14px; padding: 10px 0 12px 84px; background: linear-gradient(90deg, #efeff2 540px, #d8dadf 540px); }
.vsplit { display: flex; flex-direction: column; width: 20px; flex: none; background: #e8e8e8; padding: 14px 5px; }
.vsplit i { border: 10px solid transparent; border-left: 0; border-right: 10px solid #999; }
.vsplit b { width: 6px; height: 12px; margin-top: 882px; border: solid #aaa; border-width: 0 2px; }
.edge { width: 10px; flex: none; background: #e8e8e8; }

/* toolbars */
.work { display: flex; flex-direction: column; flex: 1; min-width: 0; background: #f4f4f7; }
.top { display: grid; grid-template: 50px 56px / 120px 1fr; }
.preview { grid-row: span 2; display: flex; justify-content: center; width: 104px; margin: 12px 0 10px; padding-top: 2px; border-right: 2px solid #d8d8dc; }
.tools { display: flex; align-items: center; gap: 22px; padding: 0 0 2px 6px; }
.tools button svg, .g20 button > svg { width: 32px; height: 32px; }
.tools .sep, .g20 .sep { margin: 0 -6px 0 -4px; }
.alert { width: 28px; height: 28px; margin: 0 2px; border-radius: 50%; background: #ff2d00; color: #fff; font: bold 18px/28px "Liberation Sans", sans-serif; text-align: center; }
.theme { display: flex; align-items: center; gap: 7px; }
.doctabs { display: flex; align-items: center; background: #e0e0e2; }
.newtab { width: 52px; padding-left: 17px; }
.doctab { display: flex; align-items: center; gap: 11px; width: 482px; height: 54px; align-self: flex-end; padding: 0 14px 0 10px; background: #f4f4f7; border: solid #c8c8cc; border-width: 0 2px; color: #333; }
.x { margin-left: auto; }
.tablist { margin: 0 22px 0 auto; }
.format { display: flex; gap: 10px; height: 52px; padding-left: 8px; align-items: center; }
.fgroup { display: flex; align-items: center; }
.g8 { gap: 8px; }
.g8 .sep { margin: 0 6px 0 2px; }
.g8 .sep:last-child { margin: 0 0 0 8px; }
.g20 { gap: 20px; }
.combo { display: grid; align-items: center; width: 110px; height: 40px; }
.combo > * { grid-area: 1 / 1; }
.combo svg { justify-self: end; margin-right: 12px; }
.combo select { appearance: none; width: 100%; height: 40px; padding-left: 8px; border: 2px solid #d8dadf; background: linear-gradient(#fff, #fff) 0 0 / calc(100% - 38px) 100% no-repeat #d8dadf; }
.combo .num { font: 20px "Liberation Mono", monospace; }
.combo.wide { width: 290px; }
.wide select { padding-left: 11px; }
.sq { width: 44px; height: 40px; font: bold 26px "Liberation Sans", sans-serif; color: #333; }
.ital { font: italic bold 26px "Liberation Serif", serif; }
.under { background: #4099fa; border: 2px solid #c5d8f0; color: #fff; text-decoration: underline; font-weight: 400; }
.al { width: 36px; height: 36px; padding-left: 4px; }
.drop { display: flex; align-items: center; gap: 14px; }
.g20 .drop .car { width: 14px; height: 10px; fill: #333; }
.g20 .tight { gap: 2px; }
.g20 .tight .car { width: 10px; height: 8px; }
.fcl { width: 32px; height: 32px; border-bottom: 8px solid #000; font: bold 28px/24px "Liberation Sans", sans-serif; color: #333; }
.ab { width: 32px; font: bold 22px "Liberation Sans", sans-serif; color: #444; }
.fx { width: 32px; font: 28px "Liberation Serif", serif; color: #222; white-space: nowrap; }
.fx small { font-size: 16px; }

/* rulers and parameter pane */
.ruler { height: 36px; flex: none; padding-left: 58px; background: #a8a8a8; }
.scale { display: flex; height: 36px; overflow: hidden; border-left: 2px solid #777; border-bottom: 4px solid #8e8e8e; background:
  repeating-linear-gradient(90deg, transparent 0 198px, #8e8e8e 198px 200px) 0 0 / 100% 100%,
  repeating-linear-gradient(90deg, transparent 0 98px, #8e8e8e 98px 100px) 0 100% / 100% 22px no-repeat,
  repeating-linear-gradient(90deg, transparent 0 18px, #8e8e8e 18px 20px) 0 100% / 100% 10px no-repeat, #b2b2b2; }
.scale span { width: 200px; flex: none; padding-left: 3px; font: 18px/26px "Liberation Sans", sans-serif; color: #444; }
.params { position: relative; display: flex; height: 150px; flex: none; background: #b2b2b2; }
.vruler { width: 60px; background:
  linear-gradient(#8e8e8e, #8e8e8e) 36px 96px / 22px 2px no-repeat,
  repeating-linear-gradient(transparent 0 16px, #8e8e8e 16px 18px, transparent 18px 20px) 48px 0 / 10px 100% no-repeat,
  linear-gradient(90deg, #a8a8a8 26px, #b2b2b2 26px); border-right: 2px solid #888; }
.vruler span { display: block; width: 18px; margin-left: 26px; font: 18px/18px "Liberation Sans", sans-serif; color: #444; text-align: right; transform: rotate(-90deg); }
.pform { flex: 1; padding-top: 18px; background: #abacae; border-right: 2px solid #8c8c8e; }
.prow { display: flex; height: 46px; }
.prow label { width: 160px; border: solid #969698; border-width: 2px 2px 2px 0; padding: 8px 0 0; text-align: right; }
.pin { display: flex; align-items: center; width: 238px; border: 2px solid #969698; background: #b1b1b1; }
.pin i { width: 5px; height: 26px; margin-left: 4px; background: #0a3358; border-radius: 2px; flex: none; }
.pin input { width: 100%; height: 40px; }
.pdrop { width: 42px; padding-left: 3px; border: 2px solid #707072; border-radius: 6px; }
.query { width: 280px; height: 46px; margin: 20px 0 0 160px; border: 2px solid #6a6a6c; background: linear-gradient(#acacae, #929292); }
.teal { width: 18px; margin-right: 28px; background: #6fa0ac; }
.pover { position: absolute; inset: 24px 0 auto; display: flex; justify-content: center; gap: 38px; }
.psplit { height: 20px; flex: none; background: #dadadc; }

/* sheet */
.sheetwrap { display: flex; flex: 1; min-height: 0; }
.sheet { position: relative; flex: 1; min-width: 0; overflow: hidden; background: #fff; }
.grid { table-layout: fixed; width: 2066px; border-spacing: 0; line-height: 26px; }
.grid col { width: 144px; }
.grid .rh { width: 50px; }
.grid th, .grid td { padding: 0; height: 38px; border: solid #bfbfbf; border-width: 0 2px 2px 0; text-align: center; font-weight: 400; white-space: nowrap; }
.grid th { background: #e8e8e8; border-bottom-color: #d9d9de; font: 20px "Liberation Mono", monospace; }
.grid thead th { height: 40px; padding-top: 4px; border-right-color: #d9d9de; border-bottom-color: #bfbfbf; }
.grid .corner { background: #f4f4f7; }
.corner svg { margin-left: 10px; }
.grid th.w, .w th { background: #fff; }
.grid th.cur { background: #cdf0fc; }
.grid .tall td, .grid .tall th { height: 78px; }
.grid .title { font-size: 42px; font-weight: 700; line-height: 50px; }
.grid .k th { border-right-color: #000; }
.grid .kb { border-bottom-color: #000; }
.grid .kc { border-color: #000; }
.ar { position: relative; }
.ex { position: absolute; left: 0; top: 0; }
.clip { height: 36px; line-height: 28px; overflow: hidden; }
.warn { background: linear-gradient(45deg, #ffc400 9px, transparent 9px); }
.diag text { font-size: 17px; }
.tint { fill: #556; }
.chart text { font-family: "Noto Sans", "Noto Sans CJK SC", sans-serif; fill: #666; }
.ax { font-size: 26px; text-anchor: end; }
.cat { font-size: 24px; text-anchor: middle; }
.leg { font-size: 29px; }
.wm { position: absolute; left: 50px; top: 40px; pointer-events: none; }
.wm text { font: 59px "Noto Sans", sans-serif; fill: #ff3030; fill-opacity: .08; }
.sb { display: grid; place-items: center; width: 30px; height: 30px; background: #fff; flex: none; }
.vbar { display: flex; flex-direction: column; align-items: center; gap: 2px; width: 34px; padding-top: 2px; flex: none; }
.vbar i { width: 30px; flex: 1; margin-bottom: 40px; background: #e1e1e1; }
.hbar { display: flex; gap: 2px; height: 34px; flex: none; padding: 2px 0 2px 2px; }
.hbar i { flex: 1; margin-right: 144px; background: #e1e1e1; }

/* status bar */
.status { display: flex; align-items: center; height: 39px; flex: none; }
.shtab { display: flex; align-items: center; gap: 9px; width: 134px; height: 38px; padding: 0 0 2px 16px; margin-right: 8px; background: #fff; color: #555; }
.add { margin-left: 16px; }
.zoom { display: flex; align-items: center; margin-left: auto; padding-right: 6px; }
.minus { margin: 0 14px 0 32px; }
.plus { margin: 0 14px 0 28px; }
.zoom input[type=range] { appearance: none; width: 428px; height: 24px; background: linear-gradient(#d8d8da, #d8d8da) 0 50% / 100% 2px no-repeat; }
.zoom input[type=range]::-webkit-slider-thumb { appearance: none; width: 9px; height: 24px; border-radius: 4px; background: #333; }
.zoom input[type=text] { width: 70px; height: 39px; padding-left: 8px; border: 2px solid #dcdcdf; background: #fff; font: 24px "Liberation Sans", sans-serif; }
.pct { width: 16px; margin-left: 6px; font: 20px "Liberation Mono", monospace; }

/* drop-down menu */
.menu { position: absolute; left: 116px; top: 51px; width: 422px; padding: 7px 0 20px; background: #e0e0e2; border: 2px solid #c4c4c8; border-radius: 0 0 8px 8px; z-index: 1; }
.menu h3 { display: flex; align-items: center; gap: 10px; height: 40px; margin: 0 26px 0 10px; color: #333; font-size: 24px; }
.menu h3::after { content: ""; flex: 1; height: 2px; margin-top: 10px; background: #333; }
.menu button { position: relative; display: flex; align-items: center; width: 100%; height: 42px; padding-left: 18px; text-align: left; }
.menu button svg { width: 32px; height: 32px; margin-right: 19px; }
.menu hr { height: 2px; margin: 9px 26px 5px 62px; border: 0; background: repeating-linear-gradient(90deg, #999 0 6px, transparent 6px 8px); }
.menu kbd { margin-left: auto; padding-right: 50px; font: 20px "Liberation Sans", sans-serif; }
.menu .mark { inset: -4px -4px -5px -2px; }
.b2 { left: 309px; top: 86px; }

/* export dialog */
.dialog { position: absolute; left: 1247px; top: 553px; width: 1310px; border: 2px solid #999; background: #f4f4f7; z-index: 1; }
.dtitle { display: flex; align-items: center; justify-content: space-between; height: 50px; padding: 0 22px 0 5px; background: #fff; color: #999; }
.dbody { padding: 28px 27px 7px; }
.dtabs { display: flex; align-items: flex-end; height: 48px; padding-left: 4px; }
.dtabs button { height: 44px; padding-top: 4px; background: #d4d4d8; border: 2px solid #8ba1bd; border-bottom: 0; border-radius: 4px 4px 0 0; }
.dtabs .on { position: relative; height: 48px; padding: 0 0 6px; background: #f4f4f7; border-color: #3f99fa transparent transparent; }
.dtabs .mark { inset: 0 -4px -3px; }
.t1 { width: 76px; } .t2 { width: 94px; } .dtabs .t3 { width: 62px; margin-right: 3px; } .dtabs .t4 { width: 75px; margin-right: 3px; } .t5 { width: 88px; }
.dpanel { margin-right: 4px; padding: 21px 24px 34px; border: 2px solid #8ba1bd; box-shadow: 2px 2px #ccccd0; }
fieldset { min-width: 0; margin: 0 20px 0 14px; padding: 27px 0 16px 4px; border: 2px solid #e6e6e9; border-radius: 10px; }
legend { padding: 0 5px; line-height: 24px; color: #0a9fe0; }
.outer { margin: 0; padding: 15px 2px 158px 4px; }
.protect { margin-top: 28px; min-height: 544px; }
.checks { display: flex; flex-direction: column; align-items: flex-start; gap: 30px; padding-left: 18px; }
.checks label { position: relative; display: flex; align-items: center; gap: 7px; height: 26px; }
.checks input { appearance: none; width: 26px; height: 26px; border: 2px solid #999; }
.checks input:checked { border: 0; background: #338ff0; }
.checks input:checked::after { content: ""; display: block; width: 8px; height: 15px; margin: 3px 0 0 9px; border: solid #fff; border-width: 0 3px 3px 0; transform: rotate(40deg); }
.checks .mark { inset: -10px -36px -16px -14px; }
.hint { padding: 20px 0 0 20px; color: #888; }
.hint a { display: inline-block; margin-left: 10px; border-bottom: 2px solid #3f9bfb; color: #3f9bfb; text-decoration: none; }
.dfoot { display: flex; justify-content: flex-end; gap: 16px; padding: 32px 0 0; }
.dfoot button { position: relative; width: 88px; height: 40px; border: 2px solid #dcdcdf; background: #fff; }
.dfoot .mark { inset: -3px -4px -2px; }
.b3 { left: 136px; top: 24px; }
.b4 { left: 25px; top: 296px; }
.b5 { left: 1099px; top: 1090px; }
```
